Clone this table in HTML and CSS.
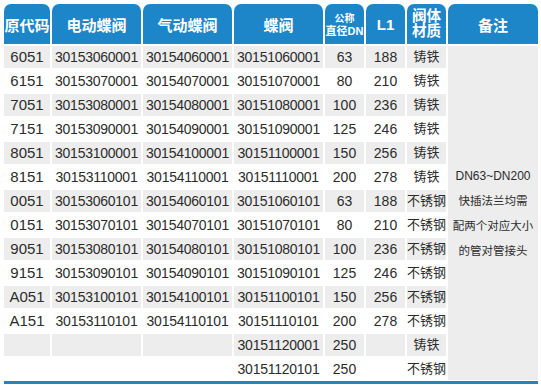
FILE: index.html
```html
<!DOCTYPE html>
<html lang="zh-CN">
<head>
    <meta charset="UTF-8">
    <title>蝶阀代码对照表</title>
    <link rel="stylesheet" href="styles.css">
</head>
<body>
    <div class="sheet">
        <table class="codes">
            <colgroup>
                <col class="c-orig">
                <col class="c-code">
                <col class="c-code">
                <col class="c-code">
                <col class="c-small">
                <col class="c-small">
                <col class="c-small">
                <col class="c-note">
            </colgroup>
            <thead>
                <tr>
                    <th>原代码</th>
                    <th>电动蝶阀</th>
                    <th>气动蝶阀</th>
                    <th>蝶阀</th>
                    <th class="th-dn"><span class="dn-top">公称</span><br>直径DN</th>
                    <th>L1</th>
                    <th class="th-mat">阀体<br>材质</th>
                    <th>备注</th>
                </tr>
            </thead>
            <tbody>
                <tr class="grey">
                    <td class="orig">6051</td><td class="code">30153060001</td><td class="code">30154060001</td><td class="code">30151060001</td><td>63</td><td>188</td><td class="mat">铸铁</td>
                    <td class="note" rowspan="14"><span class="note-dn">DN63~DN200</span><br>快插法兰均需<br>配两个对应大小<br>的管对管接头</td>
                </tr>
                <tr>
                    <td class="orig">6151</td><td class="code">30153070001</td><td class="code">30154070001</td><td class="code">30151070001</td><td>80</td><td>210</td><td class="mat">铸铁</td>
                </tr>
                <tr class="grey">
                    <td class="orig">7051</td><td class="code">30153080001</td><td class="code">30154080001</td><td class="code">30151080001</td><td>100</td><td>236</td><td class="mat">铸铁</td>
                </tr>
                <tr>
                    <td class="orig">7151</td><td class="code">30153090001</td><td class="code">30154090001</td><td class="code">30151090001</td><td>125</td><td>246</td><td class="mat">铸铁</td>
                </tr>
                <tr class="grey">
                    <td class="orig">8051</td><td class="code">30153100001</td><td class="code">30154100001</td><td class="code">30151100001</td><td>150</td><td>256</td><td class="mat">铸铁</td>
                </tr>
                <tr>
                    <td class="orig">8151</td><td class="code">30153110001</td><td class="code">30154110001</td><td class="code">30151110001</td><td>200</td><td>278</td><td class="mat">铸铁</td>
                </tr>
                <tr class="grey">
                    <td class="orig">0051</td><td class="code">30153060101</td><td class="code">30154060101</td><td class="code">30151060101</td><td>63</td><td>188</td><td class="mat">不锈钢</td>
                </tr>
                <tr>
                    <td class="orig">0151</td><td class="code">30153070101</td><td class="code">30154070101</td><td class="code">30151070101</td><td>80</td><td>210</td><td class="mat">不锈钢</td>
                </tr>
                <tr class="grey">
                    <td class="orig">9051</td><td class="code">30153080101</td><td class="code">30154080101</td><td class="code">30151080101</td><td>100</td><td>236</td><td class="mat">不锈钢</td>
                </tr>
                <tr>
                    <td class="orig">9151</td><td class="code">30153090101</td><td class="code">30154090101</td><td class="code">30151090101</td><td>125</td><td>246</td><td class="mat">不锈钢</td>
                </tr>
                <tr class="grey">
                    <td class="orig">A051</td><td class="code">30153100101</td><td class="code">30154100101</td><td class="code">30151100101</td><td>150</td><td>256</td><td class="mat">不锈钢</td>
                </tr>
                <tr>
                    <td class="orig">A151</td><td class="code">30153110101</td><td class="code">30154110101</td><td class="code">30151110101</td><td>200</td><td>278</td><td class="mat">不锈钢</td>
                </tr>
                <tr class="grey">
                    <td class="orig"></td><td class="code"></td><td class="code"></td><td class="code">30151120001</td><td>250</td><td></td><td class="mat">铸铁</td>
                </tr>
                <tr>
                    <td class="orig"></td><td class="code"></td><td class="code"></td><td class="code">30151120101</td><td>250</td><td></td><td class="mat">不锈钢</td>
                </tr>
            </tbody>
        </table>
        <div class="rule"></div>
    </div>
</body>
</html>
```

FILE: styles.css
```css
* {
    margin: 0;
    padding: 0;
    box-sizing: border-box;
}

body {
    background: #ffffff;
    font-family: "Liberation Sans", "Noto Sans CJK SC", sans-serif;
    color: #2c2c2c;
}

.sheet {
    padding: 2px 0 0 2px;
    width: 540px;
}

/* table */
.codes {
    table-layout: fixed;
    border-collapse: separate;
    border-spacing: 2px;
    width: 538px;
}

.c-orig { width: 46px; }
.c-code { width: 89px; }
.c-small { width: 39px; }
.c-note { width: 90px; }

.codes th {
    height: 40px;
    background: #1d86c8;
    color: #ffffff;
    font-size: 15px;
    font-weight: bold;
    border-radius: 7px 7px 0 0;
    text-align: center;
    vertical-align: middle;
    white-space: nowrap;
    overflow: hidden;
}

.codes th.th-dn {
    font-size: 11px;
    line-height: 12px;
    padding-top: 1px;
}

.dn-top {
    font-size: 10px;
}

.codes th.th-mat {
    font-size: 14.5px;
    line-height: 15px;
}

.codes td {
    height: 22px;
    font-size: 14px;
    text-align: center;
    vertical-align: middle;
    white-space: nowrap;
    overflow: hidden;
    line-height: 22px;
}

.codes tr.grey td {
    background: #ecedec;
}

.codes td.orig {
    font-size: 15px;
}

.codes td.code {
    letter-spacing: -0.25px;
}

.codes td.mat {
    font-size: 13px;
}

.codes td.note {
    background: #ecedec;
    font-size: 11.5px;
    line-height: 25px;
    padding-top: 1px;
}

.note-dn {
    font-size: 12px;
}

/* bottom line */
.rule {
    margin: -1px 0 0 2px;
    width: 534px;
    height: 3px;
    background: #1d86c8;
}
```
